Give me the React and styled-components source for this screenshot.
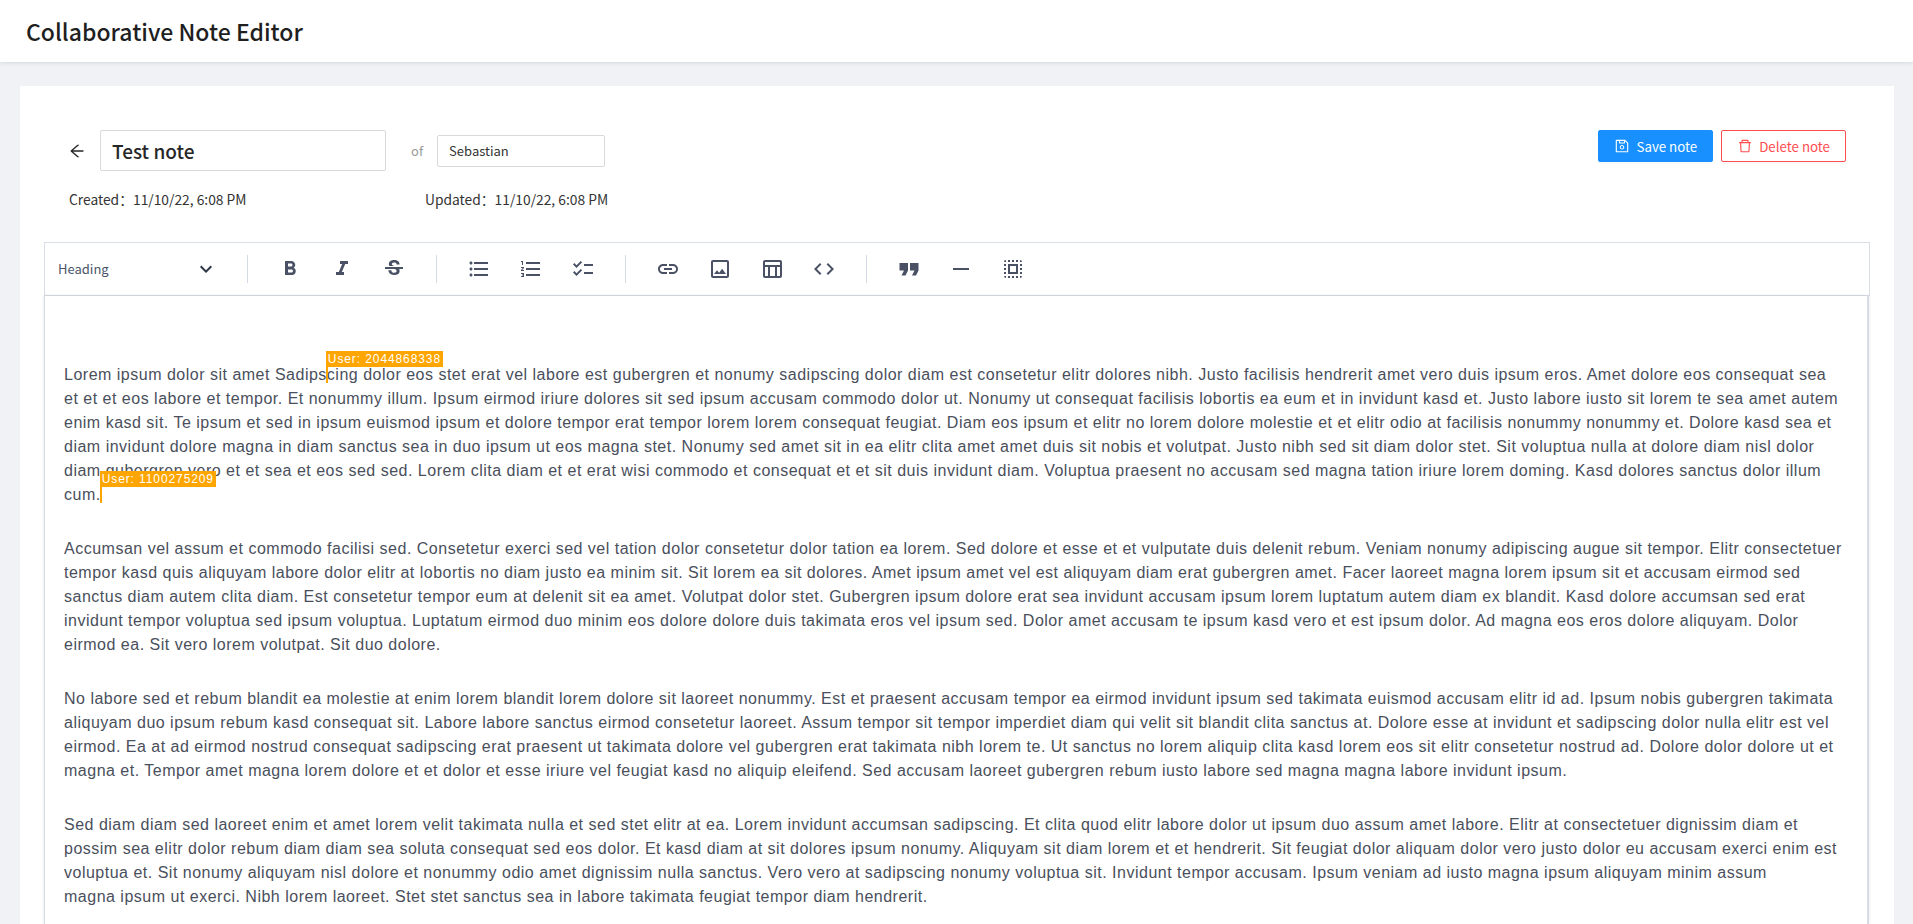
import React from 'react';
import styled, { createGlobalStyle } from 'styled-components';
import { AiOutlineArrowLeft, AiOutlineSave, AiOutlineDelete } from 'react-icons/ai';
import {
  MdFormatBold,
  MdFormatItalic,
  MdStrikethroughS,
  MdFormatListBulleted,
  MdFormatListNumbered,
  MdChecklist,
  MdLink,
  MdOutlineImage,
  MdOutlineTableChart,
  MdCode,
  MdHorizontalRule,
  MdSelectAll,
  MdKeyboardArrowDown,
} from 'react-icons/md';

const UI_FONT = '"Noto Sans CJK SC", "Noto Sans", sans-serif';

const GlobalStyle = createGlobalStyle`
  html, body {
    margin: 0;
    height: 924px;
    overflow: hidden;
    background: #f0f2f5;
    font-family: ${UI_FONT};
  }
  * { box-sizing: border-box; }
`;

const Header = styled.header`
  height: 62px;
  padding-left: 26px;
  display: flex;
  align-items: center;
  background: #fff;
  box-shadow: 0 1px 4px rgba(0, 21, 41, 0.12);
`;

const Title = styled.h1`
  margin: 0;
  font-size: 23px;
  font-weight: 500;
  color: #1f1f1f;
`;

const Main = styled.main`
  height: 862px;
  padding: 24px 19px 0 20px;
`;

const Card = styled.section`
  height: 100%;
  display: flex;
  flex-direction: column;
  background: #fff;
  padding: 44px 24px 0 24px;
`;

const TopRow = styled.div`
  display: flex;
  align-items: center;
  padding: 0 24px;
`;

const BackButton = styled.span`
  width: 32px;
  display: flex;
  color: #262626;
  font-size: 18px;
`;

const NameInput = styled.div`
  width: 286px;
  height: 41px;
  border: 1px solid #d9d9d9;
  border-radius: 2px;
  padding-left: 11px;
  display: flex;
  align-items: center;
  font-size: 19px;
  font-weight: 500;
  color: #262626;
`;

const OfLabel = styled.span`
  margin: 0 14px 0 25px;
  font-size: 13px;
  color: #999;
`;

const OwnerInput = styled.div`
  width: 168px;
  height: 32px;
  border: 1px solid #d9d9d9;
  border-radius: 2px;
  padding-left: 11px;
  display: flex;
  align-items: center;
  font-size: 13px;
  color: #333;
`;

const Actions = styled.div`
  margin-left: auto;
  align-self: flex-start;
  display: flex;
  gap: 8px;
`;

const ActionButton = styled.button`
  height: 32px;
  padding: 0 15px;
  display: flex;
  align-items: center;
  gap: 6px;
  border-radius: 2px;
  font-family: inherit;
  font-size: 13.3px;
  border: 1px solid ${(p) => (p.$danger ? '#ff4d4f' : '#1890ff')};
  background: ${(p) => (p.$danger ? '#fff' : '#1890ff')};
  color: ${(p) => (p.$danger ? '#ff4d4f' : '#fff')};
  box-shadow: 0 2px 0 rgba(0, 0, 0, 0.02);
`;

const Dates = styled.div`
  display: flex;
  padding-left: 25px;
  margin-top: 19px;
  font-size: 13.8px;
  line-height: 18px;
  color: #333;
`;

const DateItem = styled.span`
  width: ${(p) => p.$width}px;
`;

const Toolbar = styled.div`
  margin-top: 34px;
  height: 54px;
  flex: none;
  border: 1px solid #d9dde8;
  display: flex;
  align-items: center;
  background: #fff;
`;

const HeadingSelect = styled.div`
  width: 202px;
  padding: 0 29px 0 13px;
  display: flex;
  align-items: center;
  justify-content: space-between;
  font-size: 13px;
  color: #4a5568;
`;

const HeadingLabel = styled.span`
  margin-top: -2px;
`;

const Divider = styled.span`
  width: 1px;
  height: 28px;
  background: #d5dbe6;
`;

const ToolGroup = styled.div`
  display: flex;
  align-items: center;
  gap: 28px;
  padding: 0 30px;
`;

const Tool = styled.span`
  width: 24px;
  height: 24px;
  display: flex;
  align-items: center;
  justify-content: center;
  color: #4a5164;
  font-size: 24px;
`;

const Editor = styled.div`
  flex: 1;
  min-height: 0;
  overflow: hidden;
  margin-right: 1px;
  padding: 67px 21px 0 19px;
  border-left: 1px solid #d5dce8;
  border-right: 2px solid #d5dce8;
  box-shadow: 0 0 3px rgba(0, 0, 0, 0.12);
  font-family: "Liberation Sans", Arial, sans-serif;
  font-size: 16px;
  line-height: 24px;
  letter-spacing: 0.5px;
  color: #4a4f5c;
`;

const Paragraph = styled.p`
  margin: 0 0 30px;
`;

const Caret = styled.span`
  position: relative;
  margin: 0 -1px;
  border-left: 1px solid #ffa500;
  border-right: 1px solid #ffa500;
`;

const CaretLabel = styled.span`
  position: absolute;
  left: -1px;
  top: -15px;
  height: 16px;
  padding: 0 2px;
  background: #ffa500;
  color: #fff;
  font-size: 12px;
  line-height: 16px;
  letter-spacing: 0.9px;
  white-space: nowrap;
`;

// the quote glyph in the reference is wider and flatter than the icon packs have it
const QuoteIcon = () => (
  <svg width="24" height="24" viewBox="0 0 24 24" fill="currentColor">
    <path d="M2.5 6h8.5v7.5L8.5 18.5h-4L7 13.5H2.5z" />
    <path d="M13 6h8.5v7.5L19 18.5h-4l2.5-5H13z" />
  </svg>
);

const toolGroups = [
  [MdFormatBold, MdFormatItalic, MdStrikethroughS],
  [MdFormatListBulleted, MdFormatListNumbered, MdChecklist],
  [MdLink, MdOutlineImage, MdOutlineTableChart, MdCode],
  [QuoteIcon, MdHorizontalRule, MdSelectAll],
];

const App = () => (
  <>
    <GlobalStyle />
    <Header>
      <Title>Collaborative Note Editor</Title>
    </Header>
    <Main>
      <Card>
        <TopRow>
          <BackButton>
            <AiOutlineArrowLeft />
          </BackButton>
          <NameInput>Test note</NameInput>
          <OfLabel>of</OfLabel>
          <OwnerInput>Sebastian</OwnerInput>
          <Actions>
            <ActionButton>
              <AiOutlineSave size={16} />
              Save note
            </ActionButton>
            <ActionButton $danger>
              <AiOutlineDelete size={16} />
              Delete note
            </ActionButton>
          </Actions>
        </TopRow>
        <Dates>
          <DateItem $width={356}>Created：11/10/22, 6:08 PM</DateItem>
          <DateItem $width={300}>Updated：11/10/22, 6:08 PM</DateItem>
        </Dates>
        <Toolbar>
          <HeadingSelect>
            <HeadingLabel>Heading</HeadingLabel>
            <MdKeyboardArrowDown size={24} color="#2d3748" />
          </HeadingSelect>
          {toolGroups.map((group, i) => (
            <React.Fragment key={i}>
              <Divider />
              <ToolGroup>
                {group.map((Icon, j) => (
                  <Tool key={j}>
                    <Icon />
                  </Tool>
                ))}
              </ToolGroup>
            </React.Fragment>
          ))}
        </Toolbar>
        <Editor>
          <Paragraph>
            Lorem ipsum dolor sit amet Sadips
            <Caret>
              <CaretLabel>User: 2044868338</CaretLabel>
            </Caret>
            cing dolor eos stet erat vel labore est gubergren et nonumy sadipscing dolor diam est consetetur elitr dolores nibh. Justo facilisis hendrerit amet vero duis ipsum eros. Amet dolore eos consequat sea
            <br />
            et et et eos labore et tempor. Et nonummy illum. Ipsum eirmod iriure dolores sit sed ipsum accusam commodo dolor ut. Nonumy ut consequat facilisis lobortis ea eum et in invidunt kasd et. Justo labore iusto sit lorem te sea amet autem enim kasd sit. Te ipsum et sed in ipsum euismod ipsum et dolore tempor erat tempor lorem lorem consequat feugiat. Diam eos ipsum et elitr no lorem dolore molestie et et elitr odio at facilisis nonummy nonummy et. Dolore kasd sea et diam invidunt dolore magna in diam sanctus sea in duo ipsum ut eos magna stet. Nonumy sed amet sit in ea elitr clita amet amet duis sit nobis et volutpat. Justo nibh sed sit diam dolor stet. Sit voluptua nulla at dolore diam nisl dolor diam gubergren vero et et sea et eos sed sed. Lorem clita diam et et erat wisi commodo et consequat et et sit duis invidunt diam. Voluptua praesent no accusam sed magna tation iriure lorem doming. Kasd dolores sanctus dolor illum cum.
            <Caret>
              <CaretLabel>User: 1100275209</CaretLabel>
            </Caret>
          </Paragraph>
          <Paragraph>
            Accumsan vel assum et commodo facilisi sed. Consetetur exerci sed vel tation dolor consetetur dolor tation ea lorem. Sed dolore et esse et et vulputate duis delenit rebum. Veniam nonumy adipiscing augue sit tempor. Elitr consectetuer tempor kasd quis aliquyam labore dolor elitr at lobortis no diam justo ea minim sit. Sit lorem ea sit dolores. Amet ipsum amet vel est aliquyam diam erat gubergren amet. Facer laoreet magna lorem ipsum sit et accusam eirmod sed sanctus diam autem clita diam. Est consetetur tempor eum at delenit sit ea amet. Volutpat dolor stet. Gubergren ipsum dolore erat sea invidunt accusam ipsum lorem luptatum autem diam ex blandit. Kasd dolore accumsan sed erat invidunt tempor voluptua sed ipsum voluptua. Luptatum eirmod duo minim eos dolore dolore duis takimata eros vel ipsum sed. Dolor amet accusam te ipsum kasd vero et est ipsum dolor. Ad magna eos eros dolore aliquyam. Dolor eirmod ea. Sit vero lorem volutpat. Sit duo dolore.
          </Paragraph>
          <Paragraph>
            No labore sed et rebum blandit ea molestie at enim lorem blandit lorem dolore sit laoreet nonummy. Est et praesent accusam tempor ea eirmod invidunt ipsum sed takimata euismod accusam elitr id ad. Ipsum nobis gubergren takimata aliquyam duo ipsum rebum kasd consequat sit. Labore labore sanctus eirmod consetetur laoreet. Assum tempor sit tempor imperdiet diam qui velit sit blandit clita sanctus at. Dolore esse at invidunt et sadipscing dolor nulla elitr est vel eirmod. Ea at ad eirmod nostrud consequat sadipscing erat praesent ut takimata dolore vel gubergren erat takimata nibh lorem te. Ut sanctus no lorem aliquip clita kasd lorem eos sit elitr consetetur nostrud ad. Dolore dolor dolore ut et magna et. Tempor amet magna lorem dolore et et dolor et esse iriure vel feugiat kasd no aliquip eleifend. Sed accusam laoreet gubergren rebum iusto labore sed magna magna labore invidunt ipsum.
          </Paragraph>
          <Paragraph>
            Sed diam diam sed laoreet enim et amet lorem velit takimata nulla et sed stet elitr at ea. Lorem invidunt accumsan sadipscing. Et clita quod elitr labore dolor ut ipsum duo assum amet labore. Elitr at consectetuer dignissim diam et possim sea elitr dolor rebum diam diam sea soluta consequat sed eos dolor. Et kasd diam at sit dolores ipsum nonumy. Aliquyam sit diam lorem et et hendrerit. Sit feugiat dolor aliquam dolor vero justo dolor eu accusam exerci enim est voluptua et. Sit nonumy aliquyam nisl dolore et nonummy odio amet dignissim nulla sanctus. Vero vero at sadipscing nonumy voluptua sit. Invidunt tempor accusam. Ipsum veniam ad iusto magna ipsum aliquyam minim assum
            <br />
            magna ipsum ut exerci. Nibh lorem laoreet. Stet stet sanctus sea in labore takimata feugiat tempor diam hendrerit.
          </Paragraph>
        </Editor>
      </Card>
    </Main>
  </>
);

export default App;
